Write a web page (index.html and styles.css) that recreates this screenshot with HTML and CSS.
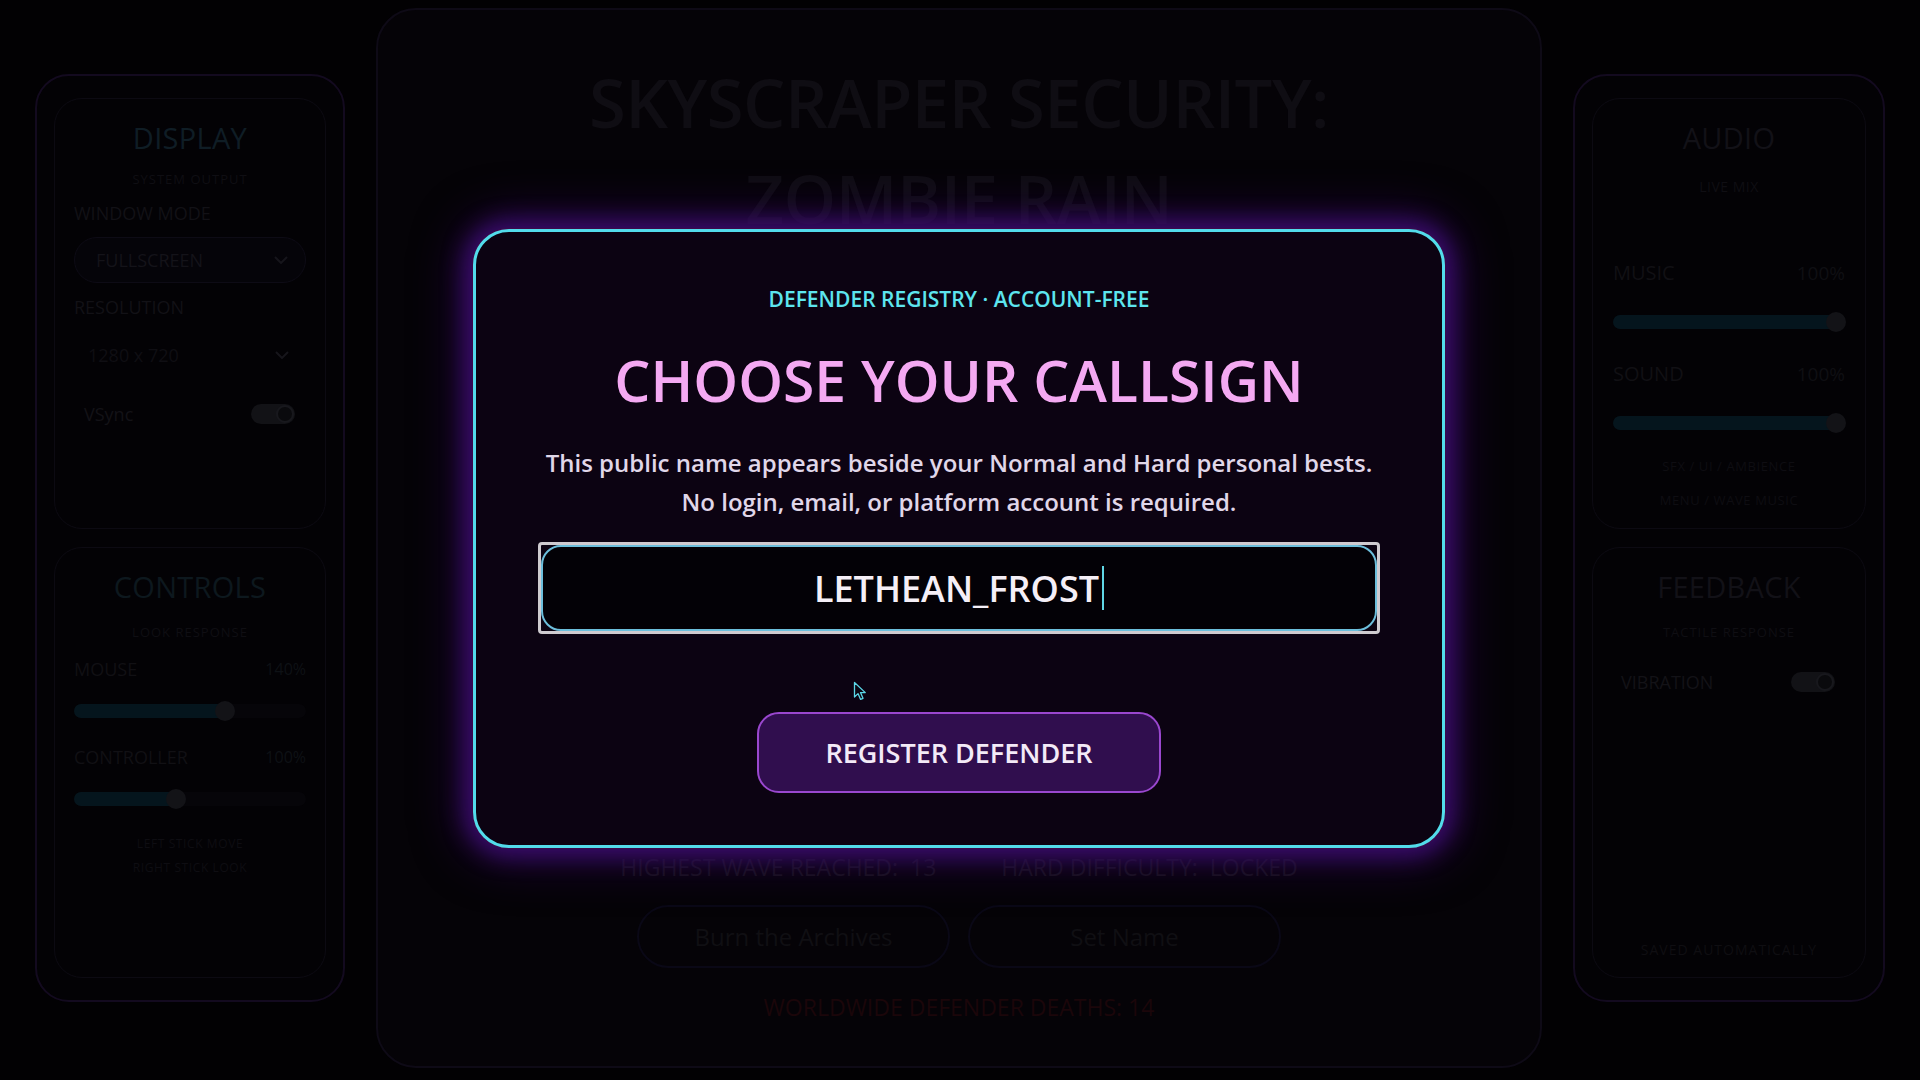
FILE: index.html
```html
<!DOCTYPE html>
<html lang="en">
<head>
<meta charset="utf-8">
<title>Skyscraper Security: Zombie Rain</title>
<link rel="stylesheet" href="styles.css">
</head>
<body>
<div class="screen">
  <!-- Left settings column -->
  <aside class="side">
    <section class="card">
      <h2 class="card-title teal">DISPLAY</h2>
      <p class="card-sub">SYSTEM OUTPUT</p>
      <div class="field-label mt-label1">WINDOW MODE</div>
      <div class="select boxed">
        <span>FULLSCREEN</span>
        <svg class="chev" viewBox="0 0 14 8" width="14" height="8"><polyline points="1,1 7,7 13,1"/></svg>
      </div>
      <div class="field-label mt-label2">RESOLUTION</div>
      <div class="select plain">
        <span>1280 x 720</span>
        <svg class="chev" viewBox="0 0 14 8" width="14" height="8"><polyline points="1,1 7,7 13,1"/></svg>
      </div>
      <div class="toggle-row vsync">
        <span class="toggle-label mixed">VSync</span>
        <span class="toggle"><span class="knob"></span></span>
      </div>
    </section>
    <section class="card">
      <h2 class="card-title teal2">CONTROLS</h2>
      <p class="card-sub sub-gap">LOOK RESPONSE</p>
      <div class="value-row mouse-row"><span>MOUSE</span><span class="val">140%</span></div>
      <div class="slider s-gap1"><span class="fill" style="width:65%"></span><span class="thumb" style="left:65%"></span></div>
      <div class="value-row ctrl-row"><span>CONTROLLER</span><span class="val">100%</span></div>
      <div class="slider s-gap2"><span class="fill" style="width:44%"></span><span class="thumb" style="left:44%"></span></div>
      <p class="hint hint-first">LEFT STICK MOVE</p>
      <p class="hint">RIGHT STICK LOOK</p>
    </section>
  </aside>

  <!-- Main menu -->
  <main class="center">
    <h1 class="game-title">SKYSCRAPER SECURITY:<br>ZOMBIE RAIN</h1>
    <div class="center-bottom">
      <div class="stats">
        <span>HIGHEST WAVE REACHED:&nbsp; 13</span>
        <span>HARD DIFFICULTY:&nbsp; LOCKED</span>
      </div>
      <div class="actions">
        <button class="ghost-btn">Burn the Archives</button>
        <button class="ghost-btn">Set Name</button>
      </div>
      <p class="deaths">WORLDWIDE DEFENDER DEATHS: 14</p>
    </div>
  </main>

  <!-- Right settings column -->
  <aside class="side side-right">
    <section class="card">
      <h2 class="card-title gray">AUDIO</h2>
      <p class="card-sub live">LIVE MIX</p>
      <div class="value-row big music-row"><span>MUSIC</span><span class="val">100%</span></div>
      <div class="slider r-gap1"><span class="fill" style="width:96%"></span><span class="thumb" style="left:96%"></span></div>
      <div class="value-row big sound-row"><span>SOUND</span><span class="val">100%</span></div>
      <div class="slider r-gap2"><span class="fill" style="width:96%"></span><span class="thumb" style="left:96%"></span></div>
      <p class="hint sfx">SFX / UI / AMBIENCE</p>
      <p class="hint menu-music">MENU / WAVE MUSIC</p>
    </section>
    <section class="card card-feedback">
      <h2 class="card-title gray">FEEDBACK</h2>
      <p class="card-sub sub-gap">TACTILE RESPONSE</p>
      <div class="toggle-row vibration">
        <span class="toggle-label">VIBRATION</span>
        <span class="toggle"><span class="knob"></span></span>
      </div>
      <p class="saved">SAVED AUTOMATICALLY</p>
    </section>
  </aside>
</div>

<!-- Callsign dialog -->
<div class="dialog" role="dialog" aria-labelledby="callsign-title">
  <p class="eyebrow">DEFENDER REGISTRY · ACCOUNT-FREE</p>
  <h2 id="callsign-title" class="dialog-title">CHOOSE YOUR CALLSIGN</h2>
  <p class="dialog-text">This public name appears beside your Normal and Hard personal bests.<br>No login, email, or platform account is required.</p>
  <div class="name-field">
    <div class="name-input"><span class="name-text">LETHEAN_FROST</span><span class="caret"></span></div>
  </div>
  <button class="register">REGISTER DEFENDER</button>
</div>

<svg class="pointer" viewBox="0 0 14 20" width="14" height="20"><path d="M1.5 1.5 L1.5 16 L5 12.6 L7.6 18.4 L10 17.3 L7.5 11.6 L12.3 11.6 Z"/></svg>
</body>
</html>
```
FILE: styles.css
```css
* { box-sizing: border-box; }

html, body {
  margin: 0;
  padding: 0;
  background: #020103;
  overflow: hidden;
}

body {
  font-family: "Open Sans", "Noto Sans", sans-serif;
  width: 1920px;
  height: 1080px;
}

p, h1, h2 { margin: 0; }

.screen {
  height: 1080px;
  display: grid;
  grid-template-columns: 310px 1fr 312px;
  column-gap: 31px;
  padding: 8px 35px 12px;
  align-items: center;
}

/* ---------- side columns ---------- */
.side {
  height: 928px;
  border: 2px solid #130a1f;
  border-radius: 34px;
  padding: 22px 17px;
  display: grid;
  grid-template-rows: 1fr 1fr;
  row-gap: 18px;
  background: #030205;
}

.card {
  min-height: 0;
  border: 1.5px solid #0c0a12;
  border-radius: 28px;
  padding: 21px 19px 0;
  display: flex;
  flex-direction: column;
  text-align: center;
}

.side-right .card { padding: 21px 20px 0; }
.side-right .card-feedback { padding-bottom: 16px; }

.card-title {
  font-size: 29px;
  line-height: 36px;
  font-weight: 400;
  letter-spacing: 0.3px;
}
.teal { color: #0f1d25; }
.teal2 { color: #0d181e; }
.gray { color: #121117; }

.card-sub {
  margin-top: 15px;
  font-size: 13px;
  line-height: 16px;
  letter-spacing: 1px;
  color: #0f0e13;
}
.sub-gap { margin-top: 19px; }
.live { margin-top: 23px; font-size: 14px; letter-spacing: 0.5px; }

.field-label {
  text-align: left;
  font-size: 18px;
  line-height: 22px;
  color: #121116;
}
.mt-label1 { margin-top: 15px; }
.mt-label2 { margin-top: 13px; }

.select {
  height: 46px;
  display: flex;
  align-items: center;
  justify-content: space-between;
  font-size: 18px;
  color: #141319;
}
.select.boxed {
  margin-top: 13px;
  border: 1.5px solid #0d0b15;
  border-radius: 23px;
  background: #050409;
  padding: 0 17px 0 21px;
}
.select.plain {
  margin-top: 14px;
  padding: 0 17px 0 14px;
  color: #0f0e13;
}
.chev {
  fill: none;
  stroke: #16151b;
  stroke-width: 2;
}

.toggle-row {
  display: flex;
  align-items: center;
  justify-content: space-between;
  height: 20px;
}
.vsync { margin-top: 26px; padding: 0 11px 0 10px; }
.vibration { margin-top: 32px; padding: 0 10px 0 8px; }

.toggle-label {
  font-size: 18px;
  color: #131217;
}

.toggle {
  position: relative;
  width: 44px;
  height: 20px;
  border-radius: 10px;
  background: #121216;
}
.knob {
  position: absolute;
  right: 1px;
  top: 1px;
  width: 18px;
  height: 18px;
  border-radius: 50%;
  background: #0a0a0d;
  border: 2px solid #18181d;
}

.value-row {
  display: flex;
  justify-content: space-between;
  align-items: center;
  font-size: 18px;
  line-height: 22px;
  color: #111014;
}
.value-row .val { font-size: 16px; color: #0e1115; }
.value-row.big { font-size: 20px; }
.value-row.big .val { font-size: 19px; color: #0f0f13; }

.mouse-row { margin-top: 18px; }
.ctrl-row { margin-top: 28px; }
.music-row { margin-top: 67px; }
.sound-row { margin-top: 34px; }

.slider {
  position: relative;
  height: 14px;
  border-radius: 7px;
  background: #060509;
}
.s-gap1 { margin-top: 24px; }
.s-gap2 { margin-top: 24px; }
.r-gap1 { margin-top: 31px; }
.r-gap2 { margin-top: 31px; }

.fill {
  display: block;
  height: 100%;
  border-radius: 7px;
  background: #05151d;
}
.thumb {
  position: absolute;
  top: -3px;
  width: 20px;
  height: 20px;
  margin-left: -10px;
  border-radius: 50%;
  background: #131317;
}

.hint {
  font-size: 12px;
  line-height: 24px;
  letter-spacing: 0.6px;
  color: #0e0d12;
}
.hint-first { margin-top: 26px; }
.sfx { margin-top: 25px; font-size: 13px; line-height: 22px; }
.menu-music { margin-top: 12px; font-size: 13px; line-height: 22px; }

.saved {
  margin-top: auto;
  font-size: 14px;
  line-height: 22px;
  letter-spacing: 1px;
  color: #0f0e12;
}

/* ---------- main menu ---------- */
.center {
  height: 1060px;
  border: 2px solid #0e0a16;
  border-radius: 40px;
  background: #050307;
  display: flex;
  flex-direction: column;
  align-items: center;
  padding: 44px 40px 47px;
}

.game-title {
  font-size: 67px;
  line-height: 96px;
  font-weight: 600;
  color: #0f0d13;
  text-align: center;
  letter-spacing: -0.5px;
}

.center-bottom {
  margin-top: auto;
  display: flex;
  flex-direction: column;
  align-items: center;
}

.stats {
  display: flex;
  gap: 65px;
  font-size: 23px;
  line-height: 30px;
  color: #151318;
}

.actions {
  margin-top: 23px;
  display: flex;
  gap: 18px;
}
.ghost-btn {
  width: 313px;
  height: 63px;
  border: 2px solid #0a0816;
  border-radius: 32px;
  background: transparent;
  font-family: inherit;
  font-size: 24px;
  color: #100f13;
}

.deaths {
  margin-top: 27px;
  font-size: 23px;
  line-height: 24px;
  color: #1b060a;
}

/* ---------- callsign dialog ---------- */
.dialog {
  position: absolute;
  left: 473px;
  top: 229px;
  width: 972px;
  height: 619px;
  border: 3px solid #52dceb;
  border-radius: 36px;
  background: #0c0312;
  box-shadow:
    0 0 0 1px #3c0a4a,
    0 0 22px 8px #3a0c6c,
    0 0 48px 12px rgba(58, 10, 110, 0.55);
  padding: 53px 40px 0;
  display: flex;
  flex-direction: column;
  align-items: center;
  text-align: center;
}

.eyebrow {
  font-size: 21px;
  line-height: 28px;
  font-weight: 600;
  color: #5de5ee;
}

.dialog-title {
  margin-top: 33px;
  font-size: 57px;
  line-height: 68px;
  font-weight: 600;
  color: #f4a9f2;
}

.dialog-text {
  margin-top: 29px;
  font-size: 24px;
  line-height: 39px;
  font-weight: 600;
  color: #e0d7e9;
}

.name-field {
  margin-top: 21px;
  width: 842px;
  height: 92px;
  border: 3px solid #cfcbd0;
  border-radius: 4px;
}
.name-input {
  height: 100%;
  border: 2px solid #6cbedb;
  border-radius: 20px;
  background: #030106;
  display: flex;
  align-items: center;
  justify-content: center;
}
.name-text {
  font-size: 36px;
  font-weight: 600;
  color: #f5eff7;
}
.caret {
  width: 2px;
  height: 44px;
  margin-left: 3px;
  background: #5fd6e4;
}

.register {
  margin-top: 78px;
  width: 404px;
  height: 81px;
  border: 2px solid #9a47cf;
  border-radius: 22px;
  background: #300e4e;
  font-family: inherit;
  font-size: 27px;
  font-weight: 600;
  color: #f3eaf7;
}

.pointer {
  position: absolute;
  left: 853px;
  top: 681px;
  fill: #0b0612;
  stroke: #5bd6e6;
  stroke-width: 1.3;
  stroke-linejoin: round;
}
```
